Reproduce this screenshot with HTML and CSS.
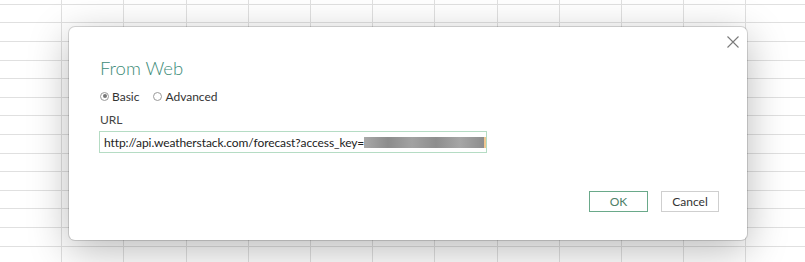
FILE: index.html
```html
<!DOCTYPE html>
<html>
<head>
<meta charset="utf-8">
<link rel="stylesheet" href="styles.css">
</head>
<body>
<div class="sheet">
  <div class="dialog">
    <button class="close" aria-label="Close">
      <svg width="12" height="12" viewBox="0 0 12 12"><path d="M0.5 0.5L11.5 11.5M11.5 0.5L0.5 11.5" stroke="#7a7a7a" stroke-width="1.1" fill="none"/></svg>
    </button>
    <h1 class="title">From Web</h1>
    <div class="radios">
      <label class="radio"><span class="dot checked"></span>Basic</label>
      <label class="radio"><span class="dot"></span>Advanced</label>
    </div>
    <div class="label">URL</div>
    <div class="input"><span class="url">http://api.weatherstack.com/forecast?access_key=</span><span class="blur"></span><span class="caret"></span></div>
    <div class="actions">
      <button class="btn ok">OK</button>
      <button class="btn">Cancel</button>
    </div>
  </div>
</div>
</body>
</html>
```
FILE: styles.css
```css
html, body {
  margin: 0;
  padding: 0;
}
body {
  width: 805px;
  height: 262px;
  overflow: hidden;
  font-family: "Lato", "Open Sans", sans-serif;
  background-color: #ffffff;
  background-image:
    repeating-linear-gradient(to right, transparent 0, transparent 61.2px, #e0e0e0 61.2px, #e0e0e0 62.2px),
    repeating-linear-gradient(to bottom, transparent 0, transparent 3.8px, #e0e0e0 3.8px, #e0e0e0 4.8px, transparent 4.8px, transparent 18.6px);
}
.sheet {
  padding: 27px 0 0 69px;
}
.dialog {
  position: relative;
  box-sizing: border-box;
  width: 678px;
  height: 213px;
  background: #ffffff;
  border-radius: 6px;
  box-shadow: 0 0 0 1px rgba(0,0,0,0.14), 0 10px 40px rgba(0,0,0,0.28);
  padding: 29px 28px 28px 31px;
  display: flex;
  flex-direction: column;
}
.close {
  position: absolute;
  left: 658px;
  top: 9px;
  border: 0;
  background: none;
  padding: 0;
  width: 12px;
  height: 12px;
  display: flex;
}
.title {
  margin: 0;
  font-weight: 300;
  font-size: 18.5px;
  line-height: 24px;
  color: #3d8b78;
}
.radios {
  display: flex;
  gap: 14px;
  margin-top: 8px;
  height: 16px;
  align-items: center;
}
.radio {
  display: flex;
  align-items: center;
  gap: 3px;
  font-size: 12px;
  color: #333333;
}
.dot {
  box-sizing: border-box;
  width: 9px;
  height: 9px;
  border: 1px solid #9a9a9a;
  border-radius: 50%;
  position: relative;
  background: #fff;
}
.dot.checked::after {
  content: "";
  position: absolute;
  left: 1.5px;
  top: 1.5px;
  width: 4px;
  height: 4px;
  border-radius: 50%;
  background: #777777;
}
.label {
  margin-top: 9px;
  font-size: 12px;
  line-height: 14px;
  color: #444444;
}
.input {
  margin-top: 4px;
  margin-left: -1px;
  box-sizing: border-box;
  width: 388px;
  height: 22px;
  border: 1px solid #b5dcc4;
  display: flex;
  align-items: center;
  padding-left: 4px;
  font-size: 12px;
  color: #222222;
}
.url {
  white-space: nowrap;
  letter-spacing: -0.08px;
}
.blur {
  width: 124px;
  height: 11px;
  background: linear-gradient(90deg, #a9a9a9, #8c8c8c 20%, #a2a2a2 40%, #8e8e8e 60%, #a6a6a6 80%, #8d8d8d);
  filter: blur(0.6px);
}
.caret {
  width: 2px;
  height: 11px;
  background: #f0c890;
}
.actions {
  margin-top: auto;
  display: flex;
  justify-content: flex-end;
  gap: 13px;
}
.btn {
  box-sizing: border-box;
  width: 58px;
  height: 21px;
  background: #ffffff;
  border: 1px solid #cfcfcf;
  font-family: inherit;
  font-size: 12px;
  color: #333333;
  padding: 0;
}
.btn.ok {
  width: 59px;
  border-color: #6aa98a;
  color: #4f7f68;
}
```
